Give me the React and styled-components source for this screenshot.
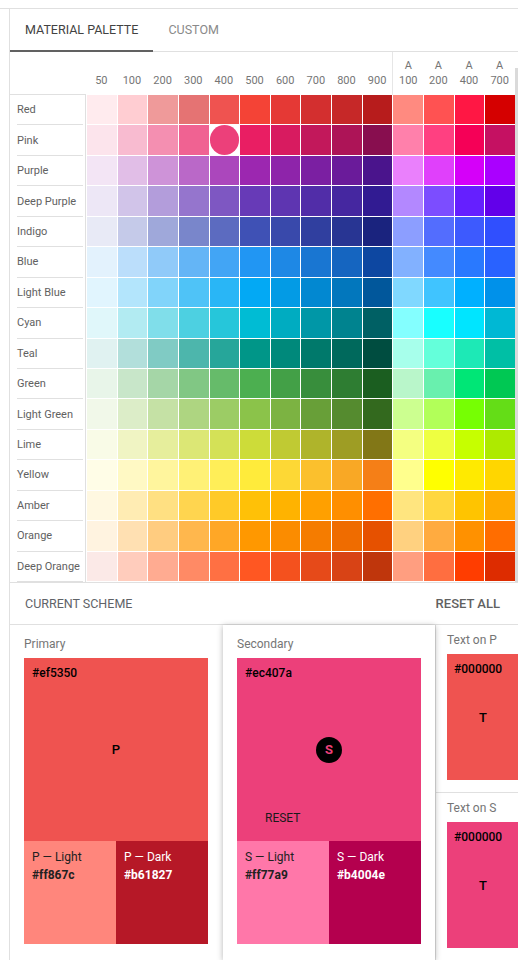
import React from 'react';
import styled, { createGlobalStyle } from 'styled-components';

const GlobalStyle = createGlobalStyle`
    html, body {
        margin: 0;
        background: #fff;
        overflow: hidden;
    }
    body {
        font-family: Roboto, "Liberation Sans", sans-serif;
    }
`;

const SHADES = ['50', '100', '200', '300', '400', '500', '600', '700', '800', '900'];
const ACCENTS = ['100', '200', '400', '700'];

const FAMILIES = [
    ['Red', ['#ffebee','#ffcdd2','#ef9a9a','#e57373','#ef5350','#f44336','#e53935','#d32f2f','#c62828','#b71c1c','#ff8a80','#ff5252','#ff1744','#d50000']],
    ['Pink', ['#fce4ec','#f8bbd0','#f48fb1','#f06292','#ec407a','#e91e63','#d81b60','#c2185b','#ad1457','#880e4f','#ff80ab','#ff4081','#f50057','#c51162']],
    ['Purple', ['#f3e5f5','#e1bee7','#ce93d8','#ba68c8','#ab47bc','#9c27b0','#8e24aa','#7b1fa2','#6a1b9a','#4a148c','#ea80fc','#e040fb','#d500f9','#aa00ff']],
    ['Deep Purple', ['#ede7f6','#d1c4e9','#b39ddb','#9575cd','#7e57c2','#673ab7','#5e35b1','#512da8','#4527a0','#311b92','#b388ff','#7c4dff','#651fff','#6200ea']],
    ['Indigo', ['#e8eaf6','#c5cae9','#9fa8da','#7986cb','#5c6bc0','#3f51b5','#3949ab','#303f9f','#283593','#1a237e','#8c9eff','#536dfe','#3d5afe','#304ffe']],
    ['Blue', ['#e3f2fd','#bbdefb','#90caf9','#64b5f6','#42a5f5','#2196f3','#1e88e5','#1976d2','#1565c0','#0d47a1','#82b1ff','#448aff','#2979ff','#2962ff']],
    ['Light Blue', ['#e1f5fe','#b3e5fc','#81d4fa','#4fc3f7','#29b6f6','#03a9f4','#039be5','#0288d1','#0277bd','#01579b','#80d8ff','#40c4ff','#00b0ff','#0091ea']],
    ['Cyan', ['#e0f7fa','#b2ebf2','#80deea','#4dd0e1','#26c6da','#00bcd4','#00acc1','#0097a7','#00838f','#006064','#84ffff','#18ffff','#00e5ff','#00b8d4']],
    ['Teal', ['#e0f2f1','#b2dfdb','#80cbc4','#4db6ac','#26a69a','#009688','#00897b','#00796b','#00695c','#004d40','#a7ffeb','#64ffda','#1de9b6','#00bfa5']],
    ['Green', ['#e8f5e9','#c8e6c9','#a5d6a7','#81c784','#66bb6a','#4caf50','#43a047','#388e3c','#2e7d32','#1b5e20','#b9f6ca','#69f0ae','#00e676','#00c853']],
    ['Light Green', ['#f1f8e9','#dcedc8','#c5e1a5','#aed581','#9ccc65','#8bc34a','#7cb342','#689f38','#558b2f','#33691e','#ccff90','#b2ff59','#76ff03','#64dd17']],
    ['Lime', ['#f9fbe7','#f0f4c3','#e6ee9c','#dce775','#d4e157','#cddc39','#c0ca33','#afb42b','#9e9d24','#827717','#f4ff81','#eeff41','#c6ff00','#aeea00']],
    ['Yellow', ['#fffde7','#fff9c4','#fff59d','#fff176','#ffee58','#ffeb3b','#fdd835','#fbc02d','#f9a825','#f57f17','#ffff8d','#ffff00','#ffea00','#ffd600']],
    ['Amber', ['#fff8e1','#ffecb3','#ffe082','#ffd54f','#ffca28','#ffc107','#ffb300','#ffa000','#ff8f00','#ff6f00','#ffe57f','#ffd740','#ffc400','#ffab00']],
    ['Orange', ['#fff3e0','#ffe0b2','#ffcc80','#ffb74d','#ffa726','#ff9800','#fb8c00','#f57c00','#ef6c00','#e65100','#ffd180','#ffab40','#ff9100','#ff6d00']],
    ['Deep Orange', ['#fbe9e7','#ffccbc','#ffab91','#ff8a65','#ff7043','#ff5722','#f4511e','#e64a19','#d84315','#bf360c','#ff9e80','#ff6e40','#ff3d00','#dd2c00']],
];

const SCHEME = [
    { key: 'P', label: 'Primary', main: '#ef5350', light: '#ff867c', dark: '#b61827' },
    { key: 'S', label: 'Secondary', main: '#ec407a', light: '#ff77a9', dark: '#b4004e', raised: true },
];

export default function App() {
    return (
        <Frame>
            <GlobalStyle />
            <Panel>
                <TabBar>
                    <Tab $active>Material Palette</Tab>
                    <Tab>Custom</Tab>
                </TabBar>

                <PaletteArea>
                    <Grid>
                        <HeaderRow>
                            <Corner />
                            {SHADES.map(s => <Heading key={s}>{s}</Heading>)}
                            {ACCENTS.map((s, i) => (
                                <Heading key={'a' + s} $divider={i === 0}>
                                    <span>A</span>
                                    <span>{s}</span>
                                </Heading>
                            ))}
                        </HeaderRow>
                        {FAMILIES.map(([name, colors]) => (
                            <Row key={name}>
                                <LabelCell><LabelText>{name}</LabelText></LabelCell>
                                {colors.map((c, i) => (
                                    name === 'Pink' && i === 4 ?
                                        <Swatch key={i} $color='#fff'><Dot $color={c} /></Swatch>
                                        : <Swatch key={i} $color={c} />
                                ))}
                            </Row>
                        ))}
                    </Grid>
                    <Scrollbar />
                </PaletteArea>

                <SchemeHeader>
                    <span>Current Scheme</span>
                    <ResetAll>Reset All</ResetAll>
                </SchemeHeader>

                <CardRow>
                    {SCHEME.map(s => (
                        <SchemeCard key={s.key} $raised={s.raised}>
                            <CardLabel>{s.label}</CardLabel>
                            <MainSwatch $color={s.main}>
                                <Hex>{s.main}</Hex>
                                {s.raised ?
                                    <Badge>{s.key}</Badge>
                                    : <Letter>{s.key}</Letter>}
                                {s.raised ? <ResetButton>Reset</ResetButton> : null}
                            </MainSwatch>
                            <Halves>
                                <Half $color={s.light}>
                                    <div>{s.key} — Light</div>
                                    <strong>{s.light}</strong>
                                </Half>
                                <Half $color={s.dark} $dark>
                                    <div>{s.key} — Dark</div>
                                    <strong>{s.dark}</strong>
                                </Half>
                            </Halves>
                        </SchemeCard>
                    ))}
                    <TextColumn>
                        {SCHEME.map(s => (
                            <TextCard key={s.key}>
                                <CardLabel>Text on {s.key}</CardLabel>
                                <TextSwatch $color={s.main}>
                                    <Hex>#000000</Hex>
                                    <Letter>T</Letter>
                                </TextSwatch>
                            </TextCard>
                        ))}
                    </TextColumn>
                </CardRow>
            </Panel>
        </Frame>
    );
}

const Frame = styled.div`
    margin-top: 8px;
    border-top: 1px solid #e0e0e0;
    padding-left: 9px;
`;

const Panel = styled.div`
    width: 508px;
    border-left: 1px solid #e0e0e0;
    overflow: hidden;
`;

const TabBar = styled.div`
    display: flex;
    align-items: flex-start;
    height: 42px;
    border-bottom: 1px solid #e0e0e0;
`;

const Tab = styled.div`
    box-sizing: border-box;
    height: 43px;
    padding: 0 15px;
    display: flex;
    align-items: center;
    font-size: 12.5px;
    text-transform: uppercase;
    color: ${p => p.$active ? '#424242' : '#8a8a8a'};
    border-bottom: 2px solid ${p => p.$active ? '#616161' : 'transparent'};
`;

const PaletteArea = styled.div`
    position: relative;
    width: 508px;
`;

const Scrollbar = styled.div`
    position: absolute;
    right: 0;
    top: 16px;
    bottom: 0;
    width: 3px;
    background: #dadada;
`;

const Grid = styled.div`
    width: 505px;
`;

const HeaderRow = styled.div`
    display: grid;
    grid-template-columns: 76px repeat(14, 1fr);
    height: 43px;
`;

const Corner = styled.div`
    border-bottom: 1px solid #e0e0e0;
`;

const Heading = styled.div`
    display: flex;
    flex-direction: column;
    justify-content: flex-end;
    align-items: center;
    padding-bottom: 7px;
    font-size: 11px;
    line-height: 14.5px;
    color: #757575;
    border-left: ${p => p.$divider ? '1px solid #e6e6e6' : 'none'};
`;

const Row = styled.div`
    display: grid;
    grid-template-columns: 76px repeat(14, 1fr);
    height: 30.44px;
`;

const LabelCell = styled.div`
    box-sizing: border-box;
    border-right: 1px solid #e0e0e0;
    display: flex;
`;

const LabelText = styled.div`
    flex: 1;
    margin: 0 2px 0 7px;
    border-bottom: 1px solid #e0e0e0;
    display: flex;
    align-items: center;
    font-size: 11px;
    color: #616161;
    white-space: nowrap;
`;

const Swatch = styled.div`
    box-sizing: border-box;
    background: ${p => p.$color};
    background-clip: content-box;
    border-left: 1px solid #fff;
    border-bottom: 1px solid #fff;
`;

const Dot = styled.div`
    width: 100%;
    height: 100%;
    border-radius: 50%;
    background: ${p => p.$color};
`;

const SchemeHeader = styled.div`
    display: flex;
    justify-content: space-between;
    align-items: center;
    height: 41px;
    padding: 0 18px 0 15px;
    border-top: 1px solid #e0e0e0;
    border-bottom: 1px solid #e0e0e0;
    font-size: 12.5px;
    text-transform: uppercase;
    color: #5f6368;
`;

const ResetAll = styled.span`
    font-size: 13px;
    font-weight: 500;
    color: #616161;
`;

const CardRow = styled.div`
    display: flex;
    align-items: stretch;
`;

const SchemeCard = styled.div`
    box-sizing: border-box;
    width: 212px;
    flex-shrink: 0;
    padding: 11px 14px 14px;
    background: #fff;
    margin-left: ${p => p.$raised ? '1px' : '0'};
    position: relative;
    z-index: ${p => p.$raised ? 1 : 0};
    box-shadow: ${p => p.$raised ? '0 1px 6px rgba(0, 0, 0, 0.3)' : 'none'};
`;

const CardLabel = styled.div`
    font-size: 12px;
    line-height: 16px;
    color: #757575;
    margin-bottom: 6px;
`;

const MainSwatch = styled.div`
    box-sizing: border-box;
    height: 183px;
    padding: 8px;
    background: ${p => p.$color};
    display: grid;
    grid-template-rows: 1fr auto 1fr;
`;

const Hex = styled.div`
    align-self: start;
    justify-self: start;
    font-size: 12px;
    line-height: 14px;
    font-weight: 500;
    color: #000;
`;

const Letter = styled.div`
    justify-self: center;
    font-size: 13px;
    font-weight: 500;
    color: #000;
`;

const Badge = styled.div`
    justify-self: center;
    width: 26px;
    height: 26px;
    border-radius: 50%;
    background: #000;
    color: #ec407a;
    font-size: 13px;
    font-weight: 700;
    display: flex;
    align-items: center;
    justify-content: center;
`;

const ResetButton = styled.div`
    align-self: end;
    justify-self: start;
    margin-left: 8px;
    padding: 8px 12px;
    font-size: 12px;
    line-height: 14px;
    text-transform: uppercase;
    color: #1a1a1a;
`;

const Halves = styled.div`
    display: grid;
    grid-template-columns: 1fr 1fr;
    height: 103px;
`;

const Half = styled.div`
    padding: 7px 8px;
    background: ${p => p.$color};
    color: ${p => p.$dark ? '#fff' : '#212121'};
    font-size: 12px;
    line-height: 18px;

    strong {
        font-weight: 700;
    }
`;

const TextColumn = styled.div`
    flex: 1;
    border-left: 1px solid #e0e0e0;
    display: flex;
    flex-direction: column;
`;

const TextCard = styled.div`
    padding: 7px 11px 12px;
    border-bottom: 1px solid #e0e0e0;

    &:last-child {
        border-bottom: none;
    }
`;

const TextSwatch = styled.div`
    box-sizing: border-box;
    width: 72px;
    height: 126px;
    padding: 8px 7px;
    background: ${p => p.$color};
    display: grid;
    grid-template-rows: 1fr auto 1fr;
`;
